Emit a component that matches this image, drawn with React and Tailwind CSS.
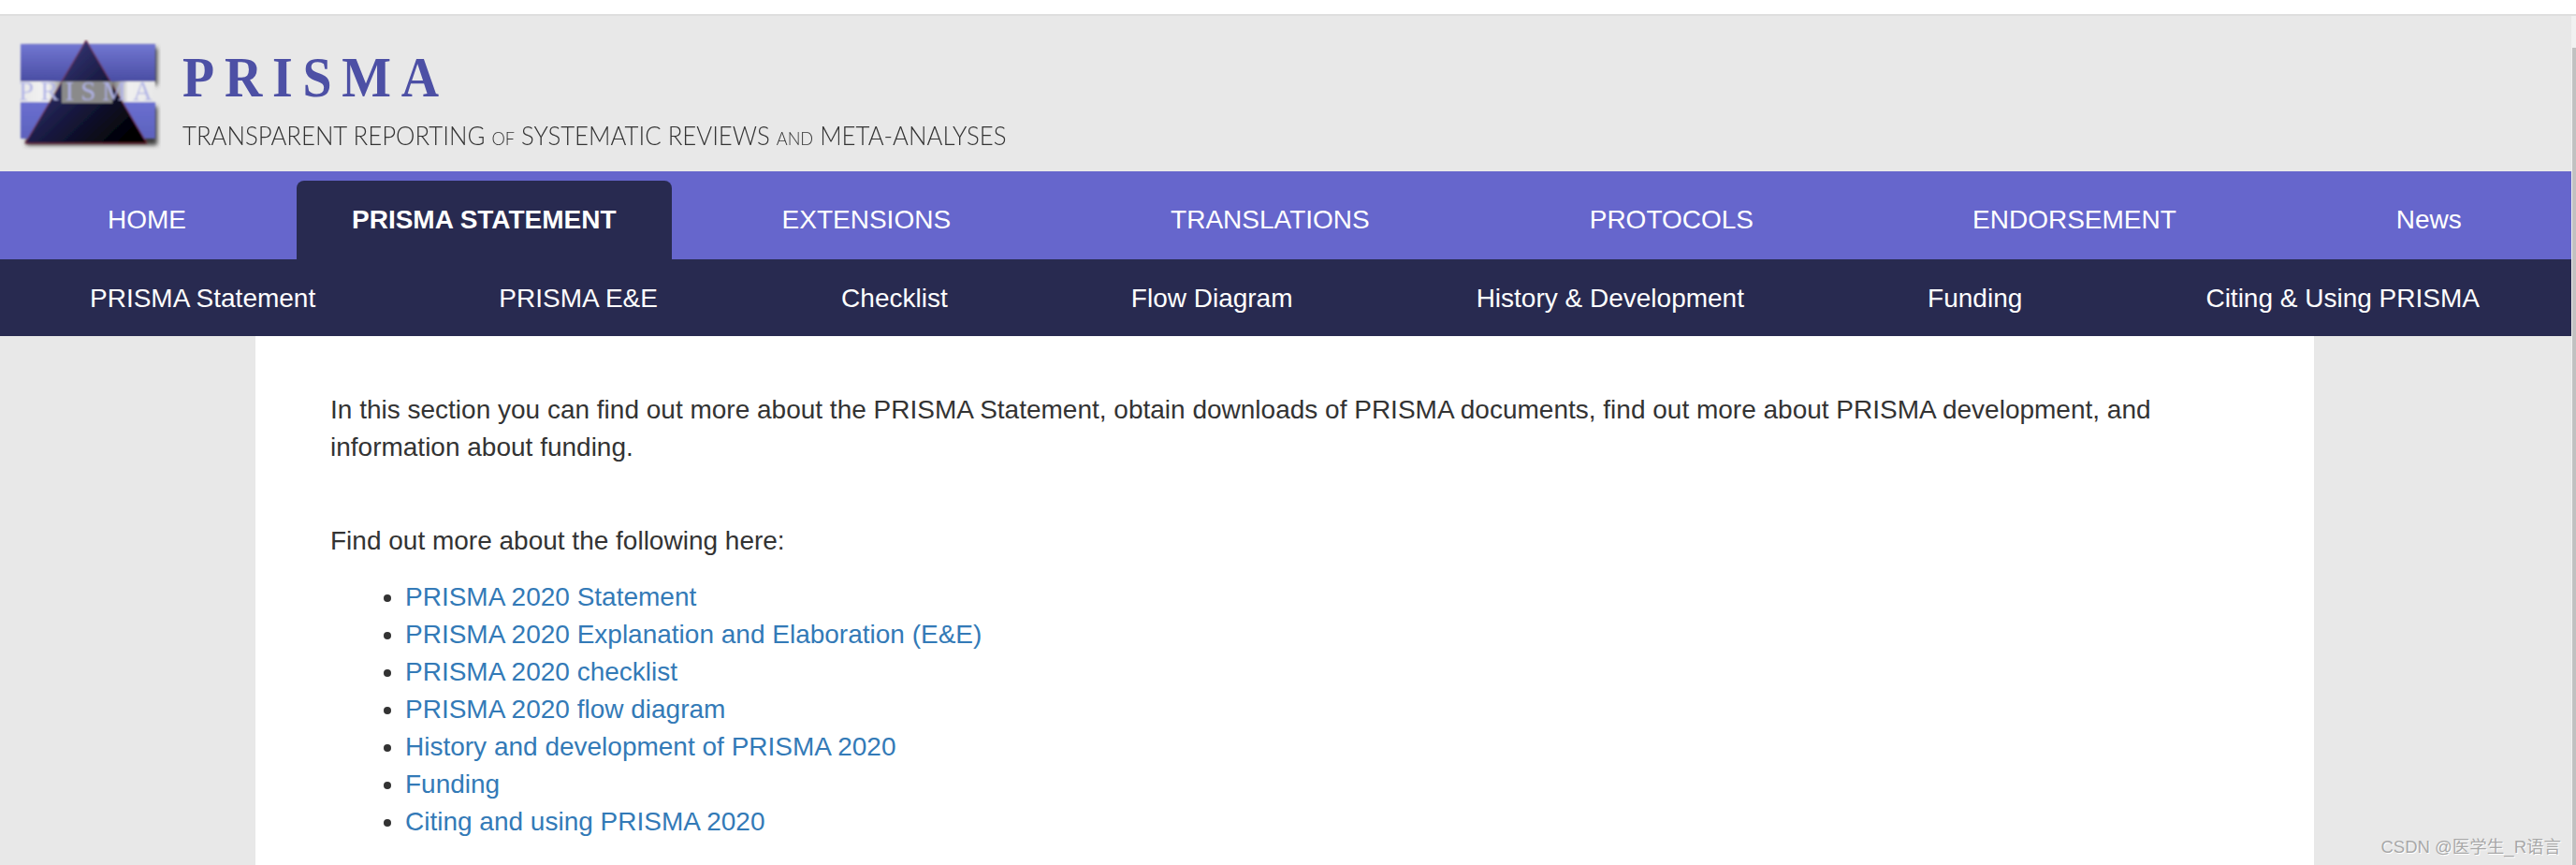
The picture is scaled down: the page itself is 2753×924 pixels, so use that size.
const mainNav = [
  { label: "HOME", className: "ml-[55px] px-[60px]" },
  { label: "PRISMA STATEMENT", className: "ml-[58px] px-[59px] rounded-t-lg bg-[#282a50] font-bold" },
  { label: "EXTENSIONS", className: "ml-[58px] px-[60px]" },
  { label: "TRANSLATIONS", className: "ml-[115px] px-[60px]" },
  { label: "PROTOCOLS", className: "ml-[115px] px-[60px]" },
  { label: "ENDORSEMENT", className: "ml-[114px] px-[60px]" },
  { label: "News", className: "ml-[115px] px-[60px]" }
];

const subNav = [
  "PRISMA Statement",
  "PRISMA E&E",
  "Checklist",
  "Flow Diagram",
  "History & Development",
  "Funding",
  "Citing & Using PRISMA"
];

const links = [
  "PRISMA 2020 Statement",
  "PRISMA 2020 Explanation and Elaboration (E&E)",
  "PRISMA 2020 checklist",
  "PRISMA 2020 flow diagram",
  "History and development of PRISMA 2020",
  "Funding",
  "Citing and using PRISMA 2020"
];

function Logo() {
  return (
    <svg width="152" height="118" viewBox="0 0 152 118" className="shrink-0">
      <defs>
        <linearGradient id="bar" x1="0" y1="0" x2="0" y2="1">
          <stop offset="0" stopColor="#7277d2" />
          <stop offset="1" stopColor="#4a4da3" />
        </linearGradient>
        <linearGradient id="bar2" x1="0" y1="0" x2="0" y2="1">
          <stop offset="0" stopColor="#6a6fd0" />
          <stop offset="1" stopColor="#5d62bd" />
        </linearGradient>
        <linearGradient id="tri" x1="0.1" y1="0.2" x2="0.9" y2="0.9">
          <stop offset="0" stopColor="#3a3c80" />
          <stop offset="0.55" stopColor="#15163a" />
          <stop offset="1" stopColor="#000000" />
        </linearGradient>
        <linearGradient id="band" x1="0" y1="0" x2="1" y2="0">
          <stop offset="0" stopColor="#e8e8e8" />
          <stop offset="0.2" stopColor="#f4f4f4" />
          <stop offset="0.35" stopColor="#777777" />
          <stop offset="0.65" stopColor="#555555" />
          <stop offset="0.8" stopColor="#f0f0f0" />
          <stop offset="1" stopColor="#e8e8e8" />
        </linearGradient>
        <filter id="soft" x="-20%" y="-20%" width="140%" height="140%"><feGaussianBlur stdDeviation="2.5" /></filter>
        <filter id="edge" x="-5%" y="-5%" width="110%" height="110%"><feGaussianBlur stdDeviation="0.9" /></filter>
      </defs>
      <g filter="url(#soft)" fill="#3c3c3c">
        <rect x="8" y="9" width="140" height="40" />
        <rect x="8" y="72" width="140" height="41" />
      </g>
      <g filter="url(#edge)">
        <rect x="2" y="5" width="144" height="40" fill="url(#bar)" />
        <rect x="2" y="45" width="144" height="23" fill="url(#band)" />
        <rect x="2" y="67" width="144" height="39" fill="url(#bar2)" />
        <path d="M72 1 L137 111 L7 111 Z" fill="url(#tri)" stroke="#7a2a3a" strokeWidth="1" />
        <rect x="46" y="45" width="54" height="23" fill="#8a8a8a" />
        <text x="75" y="65" textAnchor="middle" fontFamily="'Liberation Serif', serif" fontSize="29" letterSpacing="7" fill="#b0b3e6" opacity="0.95">PRISMA</text>
      </g>
    </svg>
  );
}

function App() {
  return (
    <div className="relative h-[924px] overflow-hidden bg-white font-['Liberation_Sans',Arial,sans-serif] text-[28px] leading-[40px] text-[#333333]">
      <div className="h-[15px] bg-white" />
      <div className="flex h-[909px] border-t-2 border-[#dedede]">
        <div className="w-[2748px] bg-[#e8e8e8]">
          <header className="flex h-[166px] items-start pl-[20px] pt-[25px]">
            <Logo />
            <div className="ml-[23px] pt-[10px]">
              <div className="h-[60px] origin-left scale-x-[0.9] font-['Liberation_Serif',serif] text-[62px] font-bold leading-[60px] tracking-[12px] text-[#4d50a5]">
                PRISMA
              </div>
              <div className="mt-[15px] origin-left scale-x-[0.955] whitespace-nowrap font-['Lato',sans-serif] text-[27px] font-light leading-[36px] text-[#333333] [font-variant:small-caps]">
                TRANSPARENT REPORTING of SYSTEMATIC REVIEWS and META-ANALYSES
              </div>
            </div>
          </header>

          <nav className="flex h-[94px] bg-[#6666cc] pt-[10px] text-white">
            {mainNav.map((item) => (
              <a key={item.label} className={`flex h-[84px] items-center whitespace-nowrap ${item.className}`}>
                {item.label}
              </a>
            ))}
          </nav>

          <nav className="flex h-[82px] items-center justify-between bg-[#282a50] pl-[96px] pr-[98px] pt-[1px] text-white">
            {subNav.map((item) => (
              <a key={item} className="whitespace-nowrap">{item}</a>
            ))}
          </nav>

          <main className="ml-[273px] h-[600px] w-[2200px] bg-white pl-[80px] pt-[59px]">
            <p className="w-[2040px]">
              In this section you can find out more about the PRISMA Statement, obtain downloads of PRISMA documents, find out more about PRISMA development, and information about funding.
            </p>
            <p className="mt-[60px]">Find out more about the following here:</p>
            <ul className="mt-[20px] list-disc pl-[80px]">
              {links.map((link) => (
                <li key={link}>
                  <a className="text-[#337ab7]">{link}</a>
                </li>
              ))}
            </ul>
          </main>
        </div>

        <div className="flex w-[5px] flex-col bg-[#f1f1f1]">
          <div className="h-[34px]" />
          <div className="ml-[1px] flex-1 bg-[#c1c1c1]" />
        </div>
      </div>

      <div className="absolute bottom-[8px] right-[16px] font-['Liberation_Sans','Noto_Sans_CJK_SC',sans-serif] text-[18.5px] leading-[22px] text-[#a8a8a8] [text-shadow:1px_1px_0_#ffffff]">
        CSDN @医学生_R语言
      </div>
    </div>
  );
}

export default App;
